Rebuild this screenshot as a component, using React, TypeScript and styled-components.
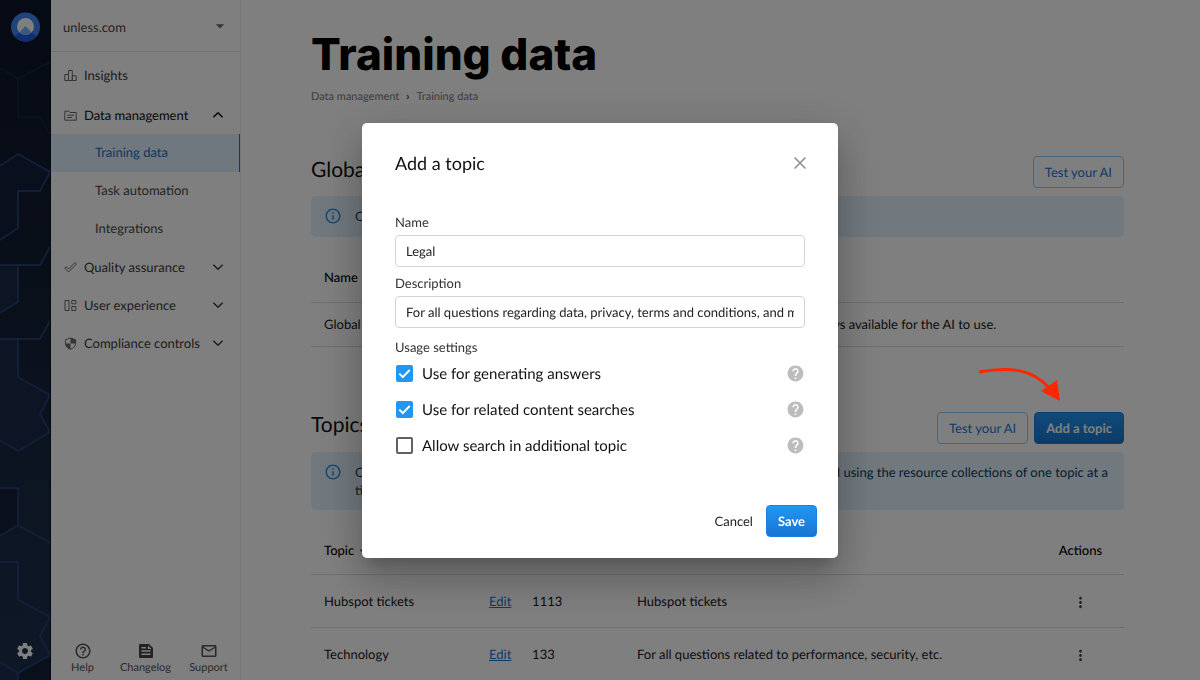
import React, { useState } from "react";
import styled, { createGlobalStyle, css } from "styled-components";
import {
  MdSettings,
  MdHelpOutline,
  MdMailOutline,
  MdHelp,
  MdMoreVert,
  MdArrowDropDown,
  MdArrowDownward,
  MdInfoOutline,
} from "react-icons/md";

const GlobalStyle = createGlobalStyle`
  *, *::before, *::after { box-sizing: border-box; }
  html, body, #root { height: 100%; }
  body {
    margin: 0;
    overflow: hidden;
    background: #ffffff;
    color: #1a1a1a;
    font-family: Lato, "Liberation Sans", sans-serif;
    font-size: 13px;
    line-height: 18px;
    text-rendering: geometricPrecision;
  }
  button, input, select { font: inherit; color: inherit; text-rendering: inherit; }
  h1, h2, p { margin: 0; font-weight: 400; }
`;

const Shell = styled.div`
  display: flex;
  height: 100vh;
  overflow: hidden;
`;

/* ---------- rail ---------- */

const Rail = styled.nav`
  position: relative;
  flex: none;
  width: 51px;
  display: flex;
  flex-direction: column;
  align-items: center;
  justify-content: space-between;
  padding: 12px 0 19px;
  border-right: 1px solid #080e1a;
  background: linear-gradient(#0b1428, #101a30 20%, #142034 45%, #1a2b46 75%, #1c2f4e);
`;

const RailPattern = styled.svg`
  position: absolute;
  inset: 0;
`;

const RailLink = styled.a`
  position: relative;
  display: flex;
  color: #ffffff;
`;

/* ---------- sidebar ---------- */

const Sidebar = styled.aside`
  flex: none;
  width: 190px;
  display: flex;
  flex-direction: column;
  border-right: 1px solid #f2f2f2;
`;

const SiteField = styled.div`
  position: relative;
  display: flex;
  align-items: center;
  height: 52px;
  border-bottom: 1px solid #e2e2e2;

  svg {
    position: absolute;
    right: 10px;
    color: #6a6a6a;
    pointer-events: none;
  }
`;

const SiteSelect = styled.select`
  appearance: none;
  width: 100%;
  height: 100%;
  padding: 2px 32px 0 12px;
  border: 0;
  background: transparent;
  color: #4a4a4a;
`;

const Menu = styled.ul`
  display: flex;
  flex-direction: column;
  flex: 1;
  margin: 0;
  padding: 4px 0 0;
  list-style: none;
`;

const MenuItem = styled.li`
  &:first-child { margin-bottom: 2px; }
`;

const Submenu = styled.ul`
  margin: 0;
  padding: 0;
  list-style: none;
`;

const menuRow = css`
  display: flex;
  align-items: center;
  width: 100%;
  height: 38px;
  border: 0;
  background: transparent;
  text-align: left;
  text-decoration: none;
  cursor: pointer;
`;

const MenuButton = styled.button<{ $open?: boolean }>`
  ${menuRow}
  gap: 7px;
  padding: 0 16px 0 13px;
  color: ${(p) => (p.$open ? "#101010" : "#3c3c3c")};

  svg:first-child { color: #6a6a6a; }
  span { flex: 1; }
`;

const SubLink = styled.a<{ $active?: boolean }>`
  ${menuRow}
  padding: 0 0 2px 44px;
  color: ${(p) => (p.$active ? "#1f6fc4" : "#4a4a4a")};
  ${(p) =>
    p.$active &&
    css`
      background: #e0f0ff;
      border-right: 1px solid #1976d2;
    `}
`;

const Footer = styled.div`
  display: grid;
  grid-template-columns: repeat(3, 1fr);
  padding-bottom: 4px;
`;

const FooterLink = styled.a`
  display: flex;
  flex-direction: column;
  align-items: center;
  color: #555555;
  font-size: 11px;
  line-height: 16px;
  text-decoration: none;
`;

/* ---------- main ---------- */

const Main = styled.main`
  flex: 1;
  min-width: 0;
  padding: 27px 76px 0 70px;
  overflow: hidden;
`;

const PageTitle = styled.h1`
  color: #000000;
  font-family: Inter, sans-serif;
  font-size: 44px;
  font-weight: 800;
  line-height: 54px;
`;

const Crumbs = styled.nav`
  display: flex;
  gap: 7px;
  margin-top: 8px;
  color: #7a7a7a;
  font-size: 11px;
  line-height: 16px;

  a { color: inherit; text-decoration: none; }
  span { color: #333333; font-weight: 700; }
`;

const Section = styled.section<{ $gap: number }>`
  margin-top: ${(p) => p.$gap}px;
`;

const SectionHead = styled.div`
  display: flex;
  align-items: center;
  justify-content: space-between;
  height: 32px;
  margin-bottom: 8px;
`;

const SectionTitle = styled.h2`
  padding-bottom: 5px;
  color: #111111;
  font-size: 21px;
  line-height: 26px;
`;

const Actions = styled.div`
  position: relative;
  display: flex;
  gap: 6px;
`;

const Button = styled.button<{ $primary?: boolean }>`
  height: 32px;
  padding: 0 11px;
  border: 1px solid #90caf9;
  border-radius: 4px;
  background: transparent;
  color: #1976d2;
  white-space: nowrap;
  ${(p) =>
    p.$primary &&
    css`
      border-color: #1a7fe0;
      background: linear-gradient(#2196f3, #1976d2);
      color: #ffffff;
      font-weight: 700;
    `}
`;

const TextButton = styled.button`
  height: 32px;
  padding: 0 13px;
  border: 0;
  background: transparent;
`;

const Pointer = styled.svg`
  position: absolute;
  right: 60px;
  bottom: 40px;
  z-index: 30;
  pointer-events: none;
`;

const Notice = styled.div`
  display: flex;
  gap: 13px;
  min-height: 41px;
  padding: 11px 10px 11px 13px;
  border-radius: 5px;
  background: #e3f2fd;
  color: #0d3c61;

  svg { flex: none; color: #2196f3; }
`;

const Table = styled.table<{ $row: number; $lastCentered?: boolean }>`
  width: 100%;
  margin-top: 16px;
  border-collapse: collapse;
  table-layout: fixed;

  th, td {
    height: ${(p) => p.$row}px;
    padding: 0 13px;
    border-bottom: 1px solid #dedede;
    text-align: left;
    font-weight: 400;
    white-space: nowrap;
  }
  th { height: 49px; color: #000000; font-weight: 500; }
  ${(p) =>
    p.$lastCentered &&
    css`
      th:last-child, td:last-child { text-align: center; }
    `}
`;

const TableLink = styled.a`
  color: #1976d2;
`;

const IconButton = styled.button`
  display: inline-flex;
  padding: 0;
  border: 0;
  background: transparent;
  color: #444444;
  vertical-align: middle;
  cursor: pointer;
`;

const SortLabel = styled.span`
  display: inline-flex;
  align-items: center;
  gap: 4px;
`;

/* ---------- dialog ---------- */

const Backdrop = styled.div`
  position: fixed;
  inset: 0;
  z-index: 10;
  display: flex;
  align-items: center;
  justify-content: center;
  background: rgba(0, 0, 0, 0.5);
`;

const Dialog = styled.form`
  width: 476px;
  max-width: calc(100% - 32px);
  border-radius: 5px;
  background: #ffffff;
  color: #222222;
  box-shadow: 0 11px 15px -7px rgba(0, 0, 0, 0.2), 0 24px 38px 3px rgba(0, 0, 0, 0.14),
    0 9px 46px 8px rgba(0, 0, 0, 0.12);
`;

const DialogHead = styled.div`
  display: flex;
  align-items: center;
  justify-content: space-between;
  padding: 28px 32px 40px 33px;

  h2 { color: #111111; font-size: 18px; line-height: 24px; }
`;

const DialogBody = styled.div`
  padding: 0 33px;
`;

const Label = styled.label`
  display: block;
  height: 20px;
  color: #333333;
  font-size: 13px;
  line-height: 14px;
`;

const Input = styled.input`
  display: block;
  width: 100%;
  height: 32px;
  margin-bottom: 9px;
  padding: 0 10px;
  border: 1px solid #d4d4d4;
  border-radius: 4px;
  background: #ffffff;
`;

const Options = styled.fieldset`
  margin: 0;
  padding: 0;
  border: 0;

  legend {
    height: 19px;
    padding: 2px 0 0;
    color: #333333;
    line-height: 16px;
  }
`;

const OptionRow = styled.div`
  display: flex;
  align-items: center;
  justify-content: space-between;
  height: 36px;
  padding-left: 1px;

  label {
    display: flex;
    align-items: center;
    gap: 9px;
    color: #111111;
    font-size: 15px;
  }
  > svg { color: #bdbdbd; }
`;

const Checkbox = styled.input`
  appearance: none;
  width: 17px;
  height: 17px;
  margin: 0;
  border: 2px solid #616161;
  border-radius: 2px;

  &:checked {
    border-color: #2196f3;
    background: #2196f3
      url("data:image/svg+xml,%3Csvg xmlns='http://www.w3.org/2000/svg' viewBox='0 0 13 13'%3E%3Cpath d='M1.3 6.6l3.5 3.5L11.7 3' fill='none' stroke='white' stroke-width='2'/%3E%3C/svg%3E")
      center / 13px no-repeat;
  }
`;

const DialogFoot = styled.div`
  display: flex;
  justify-content: flex-end;
  padding: 41px 21px 21px;
`;

/* ---------- icons ---------- */

type StrokeIconProps = { d: string; size?: number; width?: number; box?: number };

const StrokeIcon = ({ d, size = 13, width = 1, box = 13 }: StrokeIconProps) => (
  <svg
    width={size}
    height={size}
    viewBox={`0 0 ${box} ${box}`}
    fill="none"
    stroke="currentColor"
    strokeWidth={width}
    strokeLinejoin="round"
    aria-hidden="true"
  >
    <path d={d} />
  </svg>
);

const ShieldIcon = () => (
  <svg width="13" height="13" viewBox="0 0 13 13" aria-hidden="true">
    <path
      d="M6.5 .9L11.6 2.8V6.2C11.6 9.1 9.5 11.4 6.5 12.3 3.5 11.4 1.4 9.1 1.4 6.2V2.8Z"
      fill="none"
      stroke="currentColor"
    />
    <path
      d="M6.5 .9L11.6 2.8V6.5H6.5ZM6.5 6.5H1.4C1.7 9.2 3.7 11.5 6.5 12.3Z"
      fill="currentColor"
    />
  </svg>
);

const ChangelogIcon = () => (
  <svg width="18" height="18" viewBox="0 0 18 18" aria-hidden="true">
    <path
      fillRule="evenodd"
      fill="#444"
      d="M3 2H12L16 6V15A1 1 0 0 1 15 16H3A1 1 0 0 1 2 15V3A1 1 0 0 1 3 2ZM4.5 5V6.5H9V5ZM11 3.5V7H14.5ZM4.5 8.3V9.8H13.5V8.3ZM4.5 11.6V13.1H13.5V11.6Z"
    />
  </svg>
);

const Logo = () => (
  <svg width="30" height="30" viewBox="0 0 30 30" aria-hidden="true">
    <defs>
      <clipPath id="disc">
        <circle cx="15.5" cy="15" r="14.5" />
      </clipPath>
      <clipPath id="window">
        <circle cx="15.5" cy="14.5" r="8.5" />
      </clipPath>
    </defs>
    <circle cx="15.5" cy="15" r="14.5" fill="#3f87f5" />
    <path clipPath="url(#disc)" d="M15.5 14L0 29V30H31V29Z" fill="#1f5fe0" />
    <circle cx="15.5" cy="14.5" r="8.5" fill="#ffffff" />
    <path clipPath="url(#window)" d="M15.5 14L6 24H25Z" fill="#78b0f5" />
  </svg>
);

const chevronDown = "M1.5 4L6.5 9L11.5 4";
const chevronUp = "M1.5 9L6.5 4L11.5 9";

const sections = [
  {
    label: "Insights",
    icon: "M.8 5.5H4.5V11.5H.8ZM4.5 1.5H8.3V11.5H4.5ZM8.3 6.8H12.2V11.5H8.3Z",
  },
  {
    label: "Data management",
    icon: "M.8 2.2H4.8L6 3.5H12.2V11.2H.8ZM3 6.2H10M3 8.5H8",
    items: ["Training data", "Task automation", "Integrations"],
  },
  {
    label: "Quality assurance",
    icon: "M.7 7.2L2.2 5.7L4.5 8L11 1.5L12.5 3L4.5 11Z",
    expandable: true,
  },
  {
    label: "User experience",
    icon: "M1 1.5H5V11.5H1ZM7.8 1.5H11.8V4.8H7.8ZM7.8 7.5H11.8V11.5H7.8Z",
    expandable: true,
  },
  { label: "Compliance controls", expandable: true },
];

const topics = [
  { name: "Hubspot tickets", count: 1113, description: "Hubspot tickets" },
  {
    name: "Technology",
    count: 133,
    description: "For all questions related to performance, security, etc.",
  },
];

const options = [
  { id: "answers", label: "Use for generating answers", on: true },
  { id: "related", label: "Use for related content searches", on: true },
  { id: "additional", label: "Allow search in additional topic", on: false },
];

export default function App() {
  const [name, setName] = useState("Legal");
  const [description, setDescription] = useState(
    "For all questions regarding data, privacy, terms and conditions, and more."
  );

  return (
    <>
      <GlobalStyle />
      <Shell>
        <Rail aria-label="Workspace">
          <RailPattern width="50" height="100%" aria-hidden="true">
            <path d="M0 265H18V302L0 313ZM0 339H18V377L50 395L40 414L50 432L18 451L0 440Z" fill="#1a2946" />
            <path d="M0 166L18 154L50 172L40 191H18V228L0 240Z" fill="#131f39" />
            <path d="M0 488H18V525L0 536ZM18 673L50 655V700H18Z" fill="#142036" />
            <path d="M0 68L18 79L50 62M18 79V117H40L50 134" fill="none" stroke="#14233f" strokeWidth="2" />
            <g fill="none" stroke="#223e72" strokeWidth="2">
              <path d="M0 166L18 154L50 172L40 191H18V228L0 240" />
              <path d="M0 265H40L50 247M18 265V302L0 313" />
              <path d="M0 339H40L50 321M18 339V377L50 395L40 414L50 432L18 451L0 440" />
              <path d="M0 488H18V525L50 543M18 525L0 536" />
              <path d="M0 562H18V600L50 617L40 636L50 655L18 673L0 662M18 673V700" />
            </g>
          </RailPattern>
          <RailLink href="#" aria-label="Home">
            <Logo />
          </RailLink>
          <RailLink href="#" aria-label="Settings">
            <MdSettings size={20} />
          </RailLink>
        </Rail>

        <Sidebar>
          <SiteField>
            <SiteSelect aria-label="Site" defaultValue="unless.com">
              <option>unless.com</option>
            </SiteSelect>
            <MdArrowDropDown size={20} />
          </SiteField>
          <Menu>
            {sections.map((s) => (
              <MenuItem key={s.label}>
                <MenuButton type="button" $open={!!s.items}>
                  {s.icon ? <StrokeIcon d={s.icon} /> : <ShieldIcon />}
                  <span>{s.label}</span>
                  {(s.items || s.expandable) && (
                    <StrokeIcon d={s.items ? chevronUp : chevronDown} size={12} width={1.6} />
                  )}
                </MenuButton>
                {s.items && (
                  <Submenu>
                    {s.items.map((item, i) => (
                      <li key={item}>
                        <SubLink href="#" $active={i === 0}>
                          {item}
                        </SubLink>
                      </li>
                    ))}
                  </Submenu>
                )}
              </MenuItem>
            ))}
          </Menu>
          <Footer>
            <FooterLink href="#">
              <MdHelpOutline size={18} />
              Help
            </FooterLink>
            <FooterLink href="#">
              <ChangelogIcon />
              Changelog
            </FooterLink>
            <FooterLink href="#">
              <MdMailOutline size={18} />
              Support
            </FooterLink>
          </Footer>
        </Sidebar>

        <Main>
          <PageTitle>Training data</PageTitle>
          <Crumbs aria-label="Breadcrumb">
            <a href="#">Data management</a>
            <span>›</span>
            <a href="#">Training data</a>
          </Crumbs>

          <Section $gap={51}>
            <SectionHead>
              <SectionTitle>Global topic</SectionTitle>
              <Actions>
                <Button type="button">Test your AI</Button>
              </Actions>
            </SectionHead>
            <Notice>
              <MdInfoOutline size={18} />
              <p>Content in the global topic can be used in every answer.</p>
            </Notice>
            <Table $row={44}>
              <colgroup>
                <col style={{ width: "38.5%" }} />
                <col />
              </colgroup>
              <thead>
                <tr>
                  <th scope="col">Name</th>
                  <th scope="col">Description</th>
                </tr>
              </thead>
              <tbody>
                <tr>
                  <td>Global</td>
                  <td>The global resources here are always available for the AI to use.</td>
                </tr>
              </tbody>
            </Table>
          </Section>

          <Section $gap={65}>
            <SectionHead>
              <SectionTitle>Topics</SectionTitle>
              <Actions>
                <Button type="button">Test your AI</Button>
                <Button type="button" $primary>
                  Add a topic
                </Button>
                <Pointer width="88" height="40" viewBox="0 0 88 40" aria-hidden="true">
                  <path d="M3 8C32 3 56 4 73 24" fill="none" stroke="#ff2600" strokeWidth="3" />
                  <path d="M84 37L65 27L81 16Z" fill="#ff2600" />
                </Pointer>
              </Actions>
            </SectionHead>
            <Notice>
              <MdInfoOutline size={18} />
              <p>
                Create topics to group all training data and resources. Each question will be
                answered using the resource collections of one topic at a time.
              </p>
            </Notice>
            <Table $row={53} $lastCentered>
              <colgroup>
                <col style={{ width: "20.3%" }} />
                <col style={{ width: "5.3%" }} />
                <col style={{ width: "12.9%" }} />
                <col />
                <col style={{ width: "10.7%" }} />
              </colgroup>
              <thead>
                <tr>
                  <th scope="col">
                    <SortLabel>
                      Topic <MdArrowDownward size={12} />
                    </SortLabel>
                  </th>
                  <th scope="col" aria-label="Edit" />
                  <th scope="col">Resources</th>
                  <th scope="col">Description</th>
                  <th scope="col">Actions</th>
                </tr>
              </thead>
              <tbody>
                {topics.map((t) => (
                  <tr key={t.name}>
                    <td>{t.name}</td>
                    <td>
                      <TableLink href="#">Edit</TableLink>
                    </td>
                    <td>{t.count}</td>
                    <td>{t.description}</td>
                    <td>
                      <IconButton type="button" aria-label={`Actions for ${t.name}`}>
                        <MdMoreVert size={17} />
                      </IconButton>
                    </td>
                  </tr>
                ))}
              </tbody>
            </Table>
          </Section>
        </Main>
      </Shell>

      <Backdrop>
        <Dialog role="dialog" aria-labelledby="dialog-title" onSubmit={(e) => e.preventDefault()}>
          <DialogHead>
            <h2 id="dialog-title">Add a topic</h2>
            <IconButton type="button" aria-label="Close">
              <svg width="12" height="12" viewBox="0 0 12 12" stroke="#8c8c8c" strokeWidth="1.5">
                <path d="M.5 .5L11.5 11.5M11.5 .5L.5 11.5" />
              </svg>
            </IconButton>
          </DialogHead>
          <DialogBody>
            <Label htmlFor="topic-name">Name</Label>
            <Input id="topic-name" value={name} onChange={(e) => setName(e.target.value)} />
            <Label htmlFor="topic-description">Description</Label>
            <Input
              id="topic-description"
              value={description}
              onChange={(e) => setDescription(e.target.value)}
            />
            <Options>
              <legend>Usage settings</legend>
              {options.map((o) => (
                <OptionRow key={o.id}>
                  <label htmlFor={o.id}>
                    <Checkbox type="checkbox" id={o.id} defaultChecked={o.on} />
                    {o.label}
                  </label>
                  <MdHelp size={19} />
                </OptionRow>
              ))}
            </Options>
          </DialogBody>
          <DialogFoot>
            <TextButton type="button">Cancel</TextButton>
            <Button type="submit" $primary>
              Save
            </Button>
          </DialogFoot>
        </Dialog>
      </Backdrop>
    </>
  );
}
